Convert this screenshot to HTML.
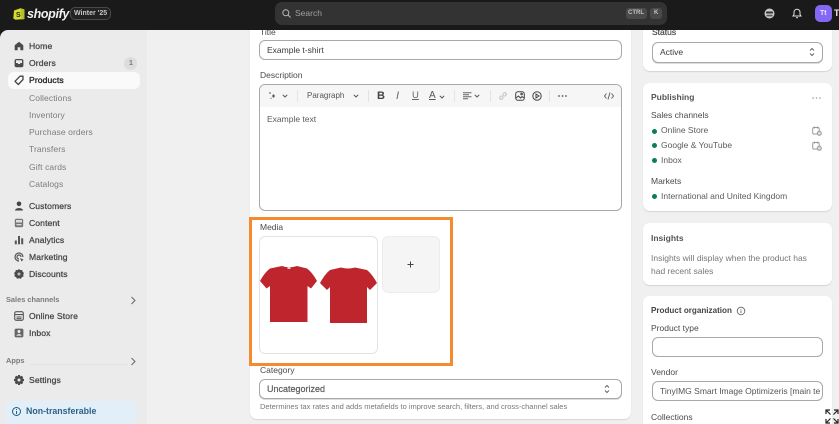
<!DOCTYPE html>
<html>
<head>
<meta charset="utf-8">
<style>
html,body{margin:0;padding:0;width:839px;height:424px;overflow:hidden;background:#f1f0f1}
body{font-family:"Liberation Sans",sans-serif;color:#303030;position:relative;font-size:9px}
#w{position:absolute;left:0;top:0;width:839px;height:424px;overflow:hidden;filter:blur(.35px)}
.a{position:absolute;white-space:nowrap}
.box{position:absolute;box-sizing:border-box}
.card{position:absolute;background:#fff;border-radius:7px;box-shadow:0 1px 1px rgba(0,0,0,.12)}
.inp{position:absolute;box-sizing:border-box;background:#fff;border:1px solid #a8a8a8;border-radius:6px;height:20px;line-height:18px;padding:0 7px;font-size:8.5px;color:#3a3a3a;white-space:nowrap;overflow:hidden}
.nav{position:absolute;left:29px;font-size:8.6px;color:#444;white-space:nowrap;letter-spacing:.1px;-webkit-text-stroke:.25px #444}
.sub{position:absolute;left:29px;font-size:8.5px;color:#7c7c7c;white-space:nowrap;letter-spacing:.1px}
.sec{position:absolute;left:6px;font-size:7.4px;color:#7a7a7a;font-weight:bold;white-space:nowrap}
.lab{position:absolute;font-size:8.5px;color:#4a4a4a;white-space:nowrap}
.dot{position:absolute;left:652px;width:5px;height:5px;border-radius:50%;background:#0a7d5a}
.ch{position:absolute;left:661px;font-size:8.5px;color:#5c5c5c;white-space:nowrap}
svg{position:absolute;overflow:visible}
</style>
</head>
<body>
<div id="w">
<div class="box" style="left:0;top:30px;width:12px;height:12px;background:#1a1a1a"></div>
<!-- sidebar -->
<div class="box" style="left:0;top:30px;width:147px;height:394px;background:#ebebeb;border-top-left-radius:8px"></div>
<div class="box" style="left:8px;top:72px;width:132px;height:17px;background:#fafafa;border-radius:6px"></div>
<svg style="left:14px;top:41px" width="10" height="10" viewBox="0 0 10 10"><path d="M5 .8 L9.3 4.3 V9.3 H6.3 V6.3 H3.7 V9.3 H.7 V4.3Z" fill="#4a4a4a"/></svg>
<div class="nav" style="top:41px">Home</div>
<svg style="left:14px;top:58px" width="10" height="10" viewBox="0 0 10 10"><rect x=".6" y="1" width="8.8" height="8.2" rx="1.8" fill="#4a4a4a"/><path d="M2 2.3 H8 V5 H6.5 L5.8 6 H4.2 L3.5 5 H2Z" fill="#ebebeb"/></svg>
<div class="nav" style="top:58px">Orders</div>
<div class="box" style="left:124px;top:57px;width:13px;height:13px;border-radius:50%;background:#dcdcdc"></div>
<div class="a" style="left:129px;top:59px;font-size:7px;line-height:9px;color:#777;font-weight:bold">1</div>
<svg style="left:14px;top:75px" width="10" height="11" viewBox="0 0 10 11" fill="none" stroke="#444" stroke-width="1.3"><path d="M6 1.2 H9 V4.5 L4.3 9.5 L1 6.3Z" stroke-linejoin="round"/></svg>
<div class="nav" style="top:75px;color:#2a2a2a;-webkit-text-stroke:.35px #2a2a2a">Products</div>
<div class="sub" style="top:93px">Collections</div>
<div class="sub" style="top:110px">Inventory</div>
<div class="sub" style="top:127px">Purchase orders</div>
<div class="sub" style="top:144px">Transfers</div>
<div class="sub" style="top:162px">Gift cards</div>
<div class="sub" style="top:179px">Catalogs</div>
<svg style="left:14px;top:201px" width="10" height="10" viewBox="0 0 10 10"><circle cx="5" cy="2.8" r="2.3" fill="#444"/><path d="M1 9.5 C1 6.3 9 6.3 9 9.5Z" fill="#444"/></svg>
<div class="nav" style="top:201px">Customers</div>
<svg style="left:14px;top:218px" width="10" height="10" viewBox="0 0 10 10"><rect x=".8" y=".8" width="8.4" height="8.4" rx="1.6" fill="#777"/><rect x="2" y="2" width="6" height="2.5" fill="#ddd"/><rect x="2.5" y="6" width="5" height="1.3" fill="#ddd"/></svg>
<div class="nav" style="top:218px">Content</div>
<svg style="left:14px;top:235px" width="10" height="10" viewBox="0 0 10 10" fill="#555"><rect x=".8" y="5.5" width="2" height="3.8"/><rect x="4" y="1" width="2" height="8.3"/><rect x="7.2" y="3.3" width="2" height="6"/></svg>
<div class="nav" style="top:235px">Analytics</div>
<svg style="left:14px;top:252px" width="10" height="10" viewBox="0 0 10 10" fill="none" stroke="#555" stroke-width="1.2"><path d="M9 5 A4 4 0 1 0 5 9"/><path d="M7 5 A2 2 0 1 0 5 7"/><path d="M6 6 L9.5 7.5 L7.5 9.5Z" fill="#555" stroke="none"/></svg>
<div class="nav" style="top:252px">Marketing</div>
<svg style="left:14px;top:269px" width="10" height="10" viewBox="0 0 10 10"><path d="M5 0 L6.4 1.1 L8.2 1 L8.6 2.8 L10 4 L9.2 5.6 L9.6 7.4 L7.9 8.1 L7 9.7 L5 9.2 L3 9.7 L2.1 8.1 L.4 7.4 L.8 5.6 L0 4 L1.4 2.8 L1.8 1 L3.6 1.1Z" fill="#4a4a4a"/><circle cx="5" cy="5" r="1.5" fill="#bbb"/></svg>
<div class="nav" style="top:269px">Discounts</div>
<div class="sec" style="top:295px">Sales channels</div>
<svg style="left:130px;top:296px" width="6" height="9" viewBox="0 0 6 9" fill="none" stroke="#666" stroke-width="1"><path d="M1.5 1 L5 4.5 L1.5 8"/></svg>
<svg style="left:14px;top:311px" width="10" height="10" viewBox="0 0 10 10" fill="none" stroke="#555" stroke-width="1.1"><rect x=".7" y=".7" width="8.6" height="8.6" rx="1.6"/><path d="M.7 3.6 H9.3 M2.5 6 H7.5 M2.5 7.7 H7.5"/></svg>
<div class="nav" style="top:311px">Online Store</div>
<svg style="left:14px;top:328px" width="10" height="10" viewBox="0 0 10 10"><rect x=".6" y=".6" width="8.8" height="8.8" rx="1.6" fill="#666"/><circle cx="5" cy="3.5" r="1.5" fill="#eee"/><path d="M2.3 7.6 C3 5.6 7 5.6 7.7 7.6Z" fill="#eee"/></svg>
<div class="nav" style="top:328px">Inbox</div>
<div class="sec" style="top:356px">Apps</div>
<div class="box" style="left:30px;top:364px;width:98px;height:1px;background:#e2e2e2"></div>
<svg style="left:130px;top:357px" width="6" height="9" viewBox="0 0 6 9" fill="none" stroke="#666" stroke-width="1"><path d="M1.5 1 L5 4.5 L1.5 8"/></svg>
<svg style="left:14px;top:375px" width="10" height="10" viewBox="0 0 10 10"><path d="M4 0 H6 L6.3 1.5 L7.7 .8 L9.2 2.3 L8.5 3.7 L10 4 V6 L8.5 6.3 L9.2 7.7 L7.7 9.2 L6.3 8.5 L6 10 H4 L3.7 8.5 L2.3 9.2 L.8 7.7 L1.5 6.3 L0 6 V4 L1.5 3.7 L.8 2.3 L2.3 .8 L3.7 1.5Z" fill="#4a4a4a"/><circle cx="5" cy="5" r="1.5" fill="#ebebeb"/></svg>
<div class="nav" style="top:375px">Settings</div>
<div class="box" style="left:5px;top:401px;width:131px;height:23px;background:#e3eff8;border-radius:6px"></div>
<svg style="left:11px;top:406px" width="11" height="11" viewBox="0 0 11 11" fill="none" stroke="#1d5f86" stroke-width="1"><circle cx="5.5" cy="5.5" r="4"/><path d="M5.5 5 V8 M5.5 3 V4"/></svg>
<div class="a" style="left:26px;top:406px;font-size:8.8px;line-height:11px;font-weight:bold;color:#2c6286">Non-transferable</div>

<!-- center card -->
<div class="card" style="left:250px;top:20px;width:381px;height:399px"></div>
<div class="lab" style="left:260px;top:27px">Title</div>
<div class="inp" style="left:259px;top:40px;width:363px">Example t-shirt</div>
<div class="lab" style="left:260px;top:70px">Description</div>
<div class="box" style="left:259px;top:84px;width:363px;height:127px;border:1px solid #a8a8a8;border-radius:6px;background:#fff"></div>
<div class="box" style="left:260px;top:85px;width:361px;height:22px;background:#f6f6f6;border-radius:5px 5px 0 0"></div>
<svg style="left:268px;top:91px" width="10" height="10" viewBox="0 0 10 10" fill="#555"><path d="M5.5 3 L7 5 L5.5 7 L4 5Z"/><path d="M2 1 L3 2 L2 3 L1 2Z"/><path d="M3 6.5 L3.7 7.2 L3 8 L2.3 7.2Z"/></svg>
<svg style="left:282px;top:93px" width="6" height="6" viewBox="0 0 6 6" fill="none" stroke="#555" stroke-width="1"><path d="M.8 1.8 L3 4 L5.2 1.8"/></svg>
<div class="box" style="left:297px;top:90px;width:1px;height:12px;background:#e3e3e3"></div>
<div class="a" style="left:307px;top:91px;font-size:8px;line-height:10px;color:#555">Paragraph</div>
<svg style="left:353px;top:93px" width="6" height="6" viewBox="0 0 6 6" fill="none" stroke="#555" stroke-width="1"><path d="M.8 1.8 L3 4 L5.2 1.8"/></svg>
<div class="box" style="left:368px;top:90px;width:1px;height:12px;background:#e3e3e3"></div>
<div class="a" style="left:377px;top:90px;font-size:11px;line-height:12px;color:#444;font-weight:bold">B</div>
<div class="a" style="left:396px;top:90px;font-size:11px;line-height:12px;color:#666;font-style:italic">I</div>
<div class="a" style="left:412px;top:90px;font-size:9.5px;line-height:11px;color:#666;text-decoration:underline">U</div>
<div class="a" style="left:429px;top:90px;font-size:10px;line-height:11px;color:#555;text-decoration:underline">A</div>
<svg style="left:439px;top:94px" width="6" height="6" viewBox="0 0 6 6" fill="none" stroke="#555" stroke-width="1"><path d="M.8 1.8 L3 4 L5.2 1.8"/></svg>
<div class="box" style="left:454px;top:90px;width:1px;height:12px;background:#e3e3e3"></div>
<svg style="left:463px;top:92px" width="9" height="8" viewBox="0 0 9 8" stroke="#666" stroke-width="1"><path d="M0 .7 H8.5 M0 2.7 H6 M0 4.7 H8.5 M0 6.7 H5"/></svg>
<svg style="left:474px;top:93px" width="6" height="6" viewBox="0 0 6 6" fill="none" stroke="#555" stroke-width="1"><path d="M.8 1.8 L3 4 L5.2 1.8"/></svg>
<div class="box" style="left:490px;top:90px;width:1px;height:12px;background:#e3e3e3"></div>
<svg style="left:498px;top:91px" width="10" height="10" viewBox="0 0 10 10" fill="none" stroke="#c4c4c4" stroke-width="1.1"><path d="M4 6 L6 4 M3.5 4.5 L1.8 6.2 A1.5 1.5 0 0 0 3.8 8.2 L5.5 6.5 M4.5 3.5 L6.2 1.8 A1.5 1.5 0 0 1 8.2 3.8 L6.5 5.5"/></svg>
<svg style="left:515px;top:91px" width="10" height="10" viewBox="0 0 10 10" fill="none" stroke="#444" stroke-width="1"><rect x=".7" y=".7" width="8.6" height="8.6" rx="2.2"/><path d="M1 7 L3.5 5 L5.5 7 L7 5.5 L9 7"/><circle cx="6.6" cy="3" r=".8"/></svg>
<svg style="left:532px;top:91px" width="10" height="10" viewBox="0 0 10 10" fill="none" stroke="#444" stroke-width="1"><circle cx="5" cy="5" r="4.2"/><path d="M4 3 L7 5 L4 7Z"/></svg>
<div class="box" style="left:549px;top:90px;width:1px;height:12px;background:#e3e3e3"></div>
<svg style="left:558px;top:95px" width="9" height="2" viewBox="0 0 9 2" fill="#555"><circle cx="1" cy="1" r=".9"/><circle cx="4.5" cy="1" r=".9"/><circle cx="8" cy="1" r=".9"/></svg>
<svg style="left:604px;top:92px" width="10" height="8" viewBox="0 0 10 8" fill="none" stroke="#666" stroke-width="1"><path d="M2.5 1.5 L.5 4 L2.5 6.5 M7.5 1.5 L9.5 4 L7.5 6.5 M6 .5 L4 7.5"/></svg>
<div class="a" style="left:267px;top:114px;font-size:8.5px;line-height:11px;color:#5a5a5a">Example text</div>

<!-- media -->
<div class="box" style="left:249px;top:217px;width:204px;height:149px;border:3px solid #f58a2e"></div>
<div class="lab" style="left:260px;top:222px">Media</div>
<div class="box" style="left:259px;top:236px;width:119px;height:118px;border:1px solid #e3e3e3;border-radius:6px;background:#fff"></div>
<svg style="left:0;top:0" width="839" height="424" viewBox="0 0 839 424"><path d="M282 266 Q289 268.5 297 266 L307 268.5 Q312 272 317 281 L311 288.5 L307.5 286 L307.5 322 L270 322 L270 286 L266.5 288.5 L260 281 Q265 272 270 268.5Z" fill="#bf252d"/><path d="M330 270 L341 267.5 Q348 269.5 355 267.5 L367 270 Q372 274 377 283 L370 290 L367 287 L367 323 L330 323 L330 287 L327 290 L320 283 Q325 274 330 270Z" fill="#bf252d"/><rect x="287.5" y="267" width="3" height="2" fill="#eecccc"/></svg>
<div class="box" style="left:382px;top:236px;width:58px;height:57px;border:1px dotted #e4e4e4;border-radius:6px;background:#f5f5f5"></div>
<svg style="left:407px;top:261px" width="7" height="7" viewBox="0 0 7 7" stroke="#444" stroke-width="1"><path d="M3.5 .5 V6.5 M.5 3.5 H6.5"/></svg>
<div class="lab" style="left:260px;top:365px">Category</div>
<div class="inp" style="left:259px;top:379px;width:363px;color:#5a5a5a;font-size:9px;-webkit-text-stroke:.2px #5a5a5a;box-shadow:0 1px 0 #ddd">Uncategorized</div>
<svg style="left:604px;top:384px" width="6" height="10" viewBox="0 0 6 10" fill="none" stroke="#666" stroke-width="1"><path d="M1 3.5 L3 1.5 L5 3.5 M1 6.5 L3 8.5 L5 6.5"/></svg>
<div class="a" style="left:260px;top:401px;font-size:7.5px;line-height:11px;color:#777">Determines tax rates and adds metafields to improve search, filters, and cross-channel sales</div>

<!-- right cards -->
<div class="card" style="left:643px;top:20px;width:189px;height:51px"></div>
<div class="lab" style="left:652px;top:27px;-webkit-text-stroke:.2px #4a4a4a">Status</div>
<div class="inp" style="left:652px;top:42px;width:171px;height:21px;line-height:19px;box-shadow:0 1px 0 #ddd">Active</div>
<svg style="left:809px;top:47px" width="6" height="10" viewBox="0 0 6 10" fill="none" stroke="#666" stroke-width="1"><path d="M1 3.5 L3 1.5 L5 3.5 M1 6.5 L3 8.5 L5 6.5"/></svg>

<div class="card" style="left:643px;top:83px;width:189px;height:128px"></div>
<div class="lab" style="left:651px;top:92px;font-weight:bold;color:#555">Publishing</div>
<svg style="left:812px;top:97px" width="9" height="2" viewBox="0 0 9 2" fill="#999"><circle cx="1" cy="1" r=".8"/><circle cx="4.5" cy="1" r=".8"/><circle cx="8" cy="1" r=".8"/></svg>
<div class="lab" style="left:651px;top:110px">Sales channels</div>
<div class="dot" style="top:129px"></div><div class="ch" style="top:125px">Online Store</div>
<div class="dot" style="top:143px"></div><div class="ch" style="top:140px">Google &amp; YouTube</div>
<div class="dot" style="top:158px"></div><div class="ch" style="top:155px">Inbox</div>
<svg style="left:812px;top:126px" width="10" height="10" viewBox="0 0 10 10" fill="none" stroke="#999" stroke-width="1"><rect x=".7" y="1.5" width="6.5" height="6.5" rx="1.3"/><path d="M2.5 .5 V2.5 M5.5 .5 V2.5"/><circle cx="7.3" cy="7.3" r="2" fill="#ddd"/></svg>
<svg style="left:812px;top:141px" width="10" height="10" viewBox="0 0 10 10" fill="none" stroke="#999" stroke-width="1"><rect x=".7" y="1.5" width="6.5" height="6.5" rx="1.3"/><path d="M2.5 .5 V2.5 M5.5 .5 V2.5"/><circle cx="7.3" cy="7.3" r="2" fill="#ddd"/></svg>
<div class="lab" style="left:651px;top:176px">Markets</div>
<div class="dot" style="top:194px"></div><div class="ch" style="top:191px">International and United Kingdom</div>

<div class="card" style="left:643px;top:223px;width:189px;height:62px"></div>
<div class="lab" style="left:651px;top:233px;font-weight:bold;color:#555">Insights</div>
<div class="a" style="left:651px;top:252px;font-size:8.5px;line-height:12.5px;color:#777;white-space:normal;width:160px">Insights will display when the product has had recent sales</div>

<div class="card" style="left:643px;top:296px;width:189px;height:140px"></div>
<div class="lab" style="left:651px;top:306px;font-weight:bold;font-size:8.1px;color:#444">Product organization</div>
<svg style="left:736px;top:306px" width="10" height="10" viewBox="0 0 10 10" fill="none" stroke="#666" stroke-width=".9"><circle cx="5" cy="5" r="3.8"/><path d="M5 4.5 V7 M5 3 V3.8"/></svg>
<div class="lab" style="left:651px;top:323px">Product type</div>
<div class="inp" style="left:652px;top:337px;width:171px"></div>
<div class="lab" style="left:651px;top:367px">Vendor</div>
<div class="inp" style="left:652px;top:381px;width:171px;color:#555">TinyIMG Smart Image Optimizeris [main te</div>
<div class="lab" style="left:651px;top:412px">Collections</div>
<svg style="left:825px;top:409px" width="14" height="15" viewBox="0 0 14 15" fill="none" stroke="#222" stroke-width="1.2"><path d="M1 5 V1 H5 M1 1 L5.5 5.5 M13 5 V1 H9 M13 1 L8.5 5.5 M1 10 V14 H5 M1 14 L5.5 9.5 M13 10 V14 H9 M13 14 L8.5 9.5"/></svg>

<!-- topbar -->
<div class="box" style="left:0;top:0;width:839px;height:30px;background:#1a1a1a"></div>
<svg style="left:13px;top:7px" width="12" height="13" viewBox="0 0 12 13"><path d="M1 3.5 L7.5 1.2 L11.5 2.5 L11.5 12 L2.5 12.7 L0.3 11.5Z" fill="#d4dc2e"/><path d="M7.5 1.2 L8.5 12.5 L11.5 12 L11.5 2.5Z" fill="#b4c02a"/><text x="3" y="10" font-family="Liberation Sans" font-size="7" font-weight="bold" fill="#1a1a1a">S</text></svg>
<div class="a" style="left:27px;top:5px;font-size:12.5px;line-height:18px;font-weight:bold;font-style:italic;color:#f1f1f1;letter-spacing:-.35px">shopify</div>
<div class="box" style="left:70px;top:7px;width:41px;height:13px;border:1px solid #4a4a4a;border-radius:5px;background:#222"></div>
<div class="a" style="left:74px;top:8px;font-size:7px;line-height:11px;color:#c8c8c8;font-weight:bold">Winter '25</div>
<div class="box" style="left:275px;top:2px;width:392px;height:23px;background:#333;border-radius:7px"></div>
<svg style="left:282px;top:9px" width="9" height="9" viewBox="0 0 9 9" fill="none" stroke="#bbb" stroke-width="1"><circle cx="3.8" cy="3.8" r="3"/><path d="M6 6 L8.5 8.5"/></svg>
<div class="a" style="left:295px;top:8px;font-size:8.5px;line-height:11px;color:#a0a0a0">Search</div>
<div class="box" style="left:626px;top:8px;width:21px;height:11px;background:#4a4a4a;border-radius:3px"></div>
<div class="a" style="left:628px;top:9px;font-size:6px;line-height:9px;color:#c4c4c4;font-weight:bold">CTRL</div>
<div class="box" style="left:650px;top:8px;width:12px;height:11px;background:#4a4a4a;border-radius:3px"></div>
<div class="a" style="left:654px;top:9px;font-size:6px;line-height:9px;color:#c4c4c4;font-weight:bold">K</div>
<svg style="left:764px;top:8px" width="11" height="11" viewBox="0 0 11 11"><circle cx="5.5" cy="5.5" r="5" fill="#c8c8c8"/><rect x="2" y="3.5" width="7" height="2" rx=".8" fill="#333"/><rect x="2.5" y="6.8" width="6" height="1.6" rx=".6" fill="#555"/></svg>
<svg style="left:792px;top:8px" width="10" height="11" viewBox="0 0 10 11" fill="none" stroke="#e0e0e0" stroke-width="1"><path d="M1 8 H9 L8 6.5 V4.2 A3 3 0 0 0 2 4.2 V6.5Z"/><path d="M4 9.7 H6"/></svg>
<div class="box" style="left:815px;top:5px;width:17px;height:17px;background:#8468f5;border-radius:5px"></div>
<div class="a" style="left:820px;top:9px;font-size:7px;line-height:9px;color:#e8e4ff;font-weight:bold">Tt</div>
<div class="a" style="left:834px;top:8px;font-size:9px;line-height:11px;color:#eee;font-weight:bold">T</div>
</div>
</body>
</html>
